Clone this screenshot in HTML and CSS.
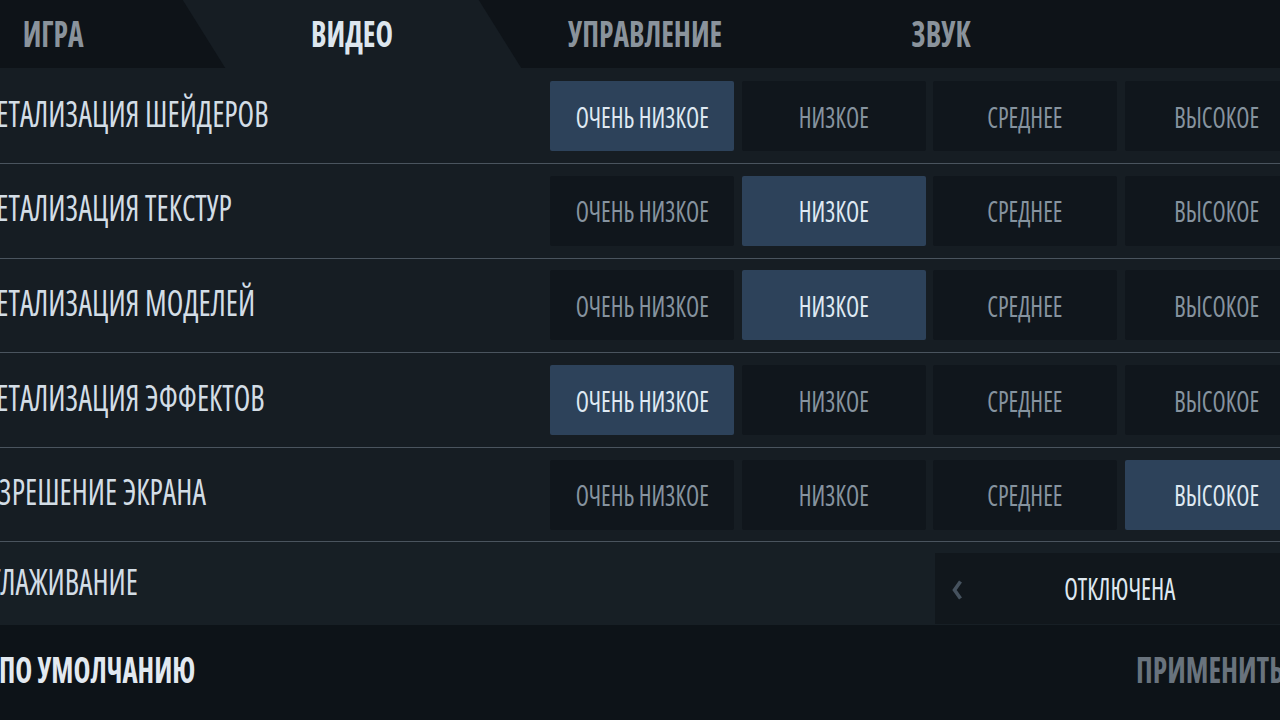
FILE: index.html
```html
<!DOCTYPE html>
<html lang="ru">
<head>
<meta charset="utf-8">
<title>Настройки — Видео</title>
<link rel="stylesheet" href="styles.css">
</head>
<body>
<div class="screen">
  <nav class="tabs">
    <div class="tab"><span class="t">ИГРА</span></div>
    <div class="tab active"><span class="t">ВИДЕО</span></div>
    <div class="tab"><span class="t">УПРАВЛЕНИЕ</span></div>
    <div class="tab"><span class="t">ЗВУК</span></div>
  </nav>

  <main class="settings">
    <div class="row">
      <div class="label"><span class="t">ДЕТАЛИЗАЦИЯ ШЕЙДЕРОВ</span></div>
      <div class="options">
        <div class="opt sel"><span class="t">ОЧЕНЬ НИЗКОЕ</span></div>
        <div class="opt"><span class="t">НИЗКОЕ</span></div>
        <div class="opt"><span class="t">СРЕДНЕЕ</span></div>
        <div class="opt"><span class="t">ВЫСОКОЕ</span></div>
      </div>
    </div>
    <div class="row">
      <div class="label"><span class="t">ДЕТАЛИЗАЦИЯ ТЕКСТУР</span></div>
      <div class="options">
        <div class="opt"><span class="t">ОЧЕНЬ НИЗКОЕ</span></div>
        <div class="opt sel"><span class="t">НИЗКОЕ</span></div>
        <div class="opt"><span class="t">СРЕДНЕЕ</span></div>
        <div class="opt"><span class="t">ВЫСОКОЕ</span></div>
      </div>
    </div>
    <div class="row">
      <div class="label"><span class="t">ДЕТАЛИЗАЦИЯ МОДЕЛЕЙ</span></div>
      <div class="options">
        <div class="opt"><span class="t">ОЧЕНЬ НИЗКОЕ</span></div>
        <div class="opt sel"><span class="t">НИЗКОЕ</span></div>
        <div class="opt"><span class="t">СРЕДНЕЕ</span></div>
        <div class="opt"><span class="t">ВЫСОКОЕ</span></div>
      </div>
    </div>
    <div class="row">
      <div class="label"><span class="t">ДЕТАЛИЗАЦИЯ ЭФФЕКТОВ</span></div>
      <div class="options">
        <div class="opt sel"><span class="t">ОЧЕНЬ НИЗКОЕ</span></div>
        <div class="opt"><span class="t">НИЗКОЕ</span></div>
        <div class="opt"><span class="t">СРЕДНЕЕ</span></div>
        <div class="opt"><span class="t">ВЫСОКОЕ</span></div>
      </div>
    </div>
    <div class="row">
      <div class="label label-res"><span class="t">РАЗРЕШЕНИЕ ЭКРАНА</span></div>
      <div class="options">
        <div class="opt"><span class="t">ОЧЕНЬ НИЗКОЕ</span></div>
        <div class="opt"><span class="t">НИЗКОЕ</span></div>
        <div class="opt"><span class="t">СРЕДНЕЕ</span></div>
        <div class="opt sel"><span class="t">ВЫСОКОЕ</span></div>
      </div>
    </div>
    <div class="row row-select">
      <div class="label label-aa"><span class="t">СГЛАЖИВАНИЕ</span></div>
      <div class="selector">
        <svg class="arrow" width="12" height="20" viewBox="0 0 12 20" aria-hidden="true">
          <polyline points="9.5,1.5 3.5,10 9.5,18.5" fill="none" stroke="#46525e" stroke-width="3.6" stroke-linejoin="miter"/>
        </svg>
        <span class="value"><span class="t">ОТКЛЮЧЕНА</span></span>
      </div>
    </div>
  </main>

  <footer class="footer">
    <div class="btn-default"><span class="t">ПО УМОЛЧАНИЮ</span></div>
    <div class="btn-apply"><span class="t">ПРИМЕНИТЬ</span></div>
  </footer>
</div>
</body>
</html>
```
FILE: styles.css
```css
* { box-sizing: border-box; }

html, body {
  margin: 0;
  padding: 0;
  background: #161d23;
}

body {
  font-family: "Open Sans", "Noto Sans", sans-serif;
  font-stretch: 75%;
  color: #d3dde6;
}

/* condensed display text: narrow the glyphs like the game's UI face */
.t {
  display: inline-block;
  white-space: nowrap;
  transform: scaleX(0.82);
  transform-origin: center;
}

.screen {
  width: 1280px;
  height: 720px;
  overflow: hidden;
  display: flex;
  flex-direction: column;
  background: #161d23;
}

/* ---------- Tabs ---------- */
.tabs {
  height: 68px;
  flex: 0 0 68px;
  display: flex;
  background: #0e1318;
  margin-left: -95px;
}

.tab {
  position: relative;
  flex: 0 0 296px;
  display: flex;
  align-items: center;
  justify-content: center;
  font-size: 36px;
  font-weight: 700;
  color: #8a939c;
  padding-bottom: 1px;
}

.tab.active {
  color: #dde6ee;
  z-index: 0;
  padding-left: 6px;
}

.tab.active::before {
  content: "";
  position: absolute;
  top: 0;
  bottom: 0;
  left: 3px;
  right: -3px;
  background: #161d23;
  transform: skewX(32deg);
  z-index: -1;
}

/* ---------- Settings rows ---------- */
.settings {
  flex: 1 1 auto;
  display: flex;
  flex-direction: column;
  padding-top: 1.5px;
  background: #161d23;
}

.row {
  height: 94.6px;
  flex: 0 0 94.6px;
  display: flex;
  align-items: center;
  border-bottom: 1px solid #4a545e;
}

.label {
  flex: 0 0 569px;
  margin-left: -19px;
  font-size: 36px;
  color: #d3dde6;
  padding-bottom: 6px;
}

.label .t {
  transform: scaleX(0.845);
  transform-origin: left center;
}

.label-res {
  flex-basis: 578px;
  margin-left: -28px;
}

.label-aa {
  margin-left: -24px;
}

.options {
  display: flex;
  gap: 7.5px;
  flex: 0 0 auto;
}

.opt {
  flex: 0 0 184px;
  height: 70px;
  display: flex;
  align-items: center;
  justify-content: center;
  background: #10161c;
  color: #86939f;
  font-size: 29.5px;
  border-radius: 2px;
}

.opt.sel {
  background: #2d425a;
  color: #dfe9f2;
}

/* ---------- Select row (anti-aliasing) ---------- */
.row-select {
  flex: 1 1 auto;
  height: auto;
  border-bottom: none;
  background: #171f25;
  align-items: stretch;
}

.row-select .label {
  display: flex;
  align-items: center;
  padding-bottom: 4px;
}

.selector {
  margin-left: auto;
  margin-right: -25px;
  margin-top: 11px;
  margin-bottom: 1px;
  flex: 0 0 370px;
  display: flex;
  align-items: center;
  background: #11171c;
  padding-left: 16px;
}

.arrow {
  flex: 0 0 auto;
  margin-top: 2px;
}

.value {
  flex: 1 1 auto;
  text-align: center;
  padding-right: 28px;
  font-size: 30.5px;
  color: #dfe8f0;
  padding-bottom: 2px;
}

/* ---------- Footer ---------- */
.footer {
  flex: 0 0 95px;
  height: 95px;
  display: flex;
  align-items: center;
  justify-content: space-between;
  background: #0d1318;
  padding-bottom: 6px;
}

.btn-default {
  font-size: 35px;
  font-weight: 700;
  color: #e2e9f0;
  margin-left: -1px;
}

.btn-default .t {
  transform-origin: left center;
}

.btn-apply {
  font-size: 35px;
  font-weight: 700;
  color: #69737d;
  margin-right: -4px;
}

.btn-apply .t {
  transform: scaleX(0.84);
  transform-origin: right center;
}
```
